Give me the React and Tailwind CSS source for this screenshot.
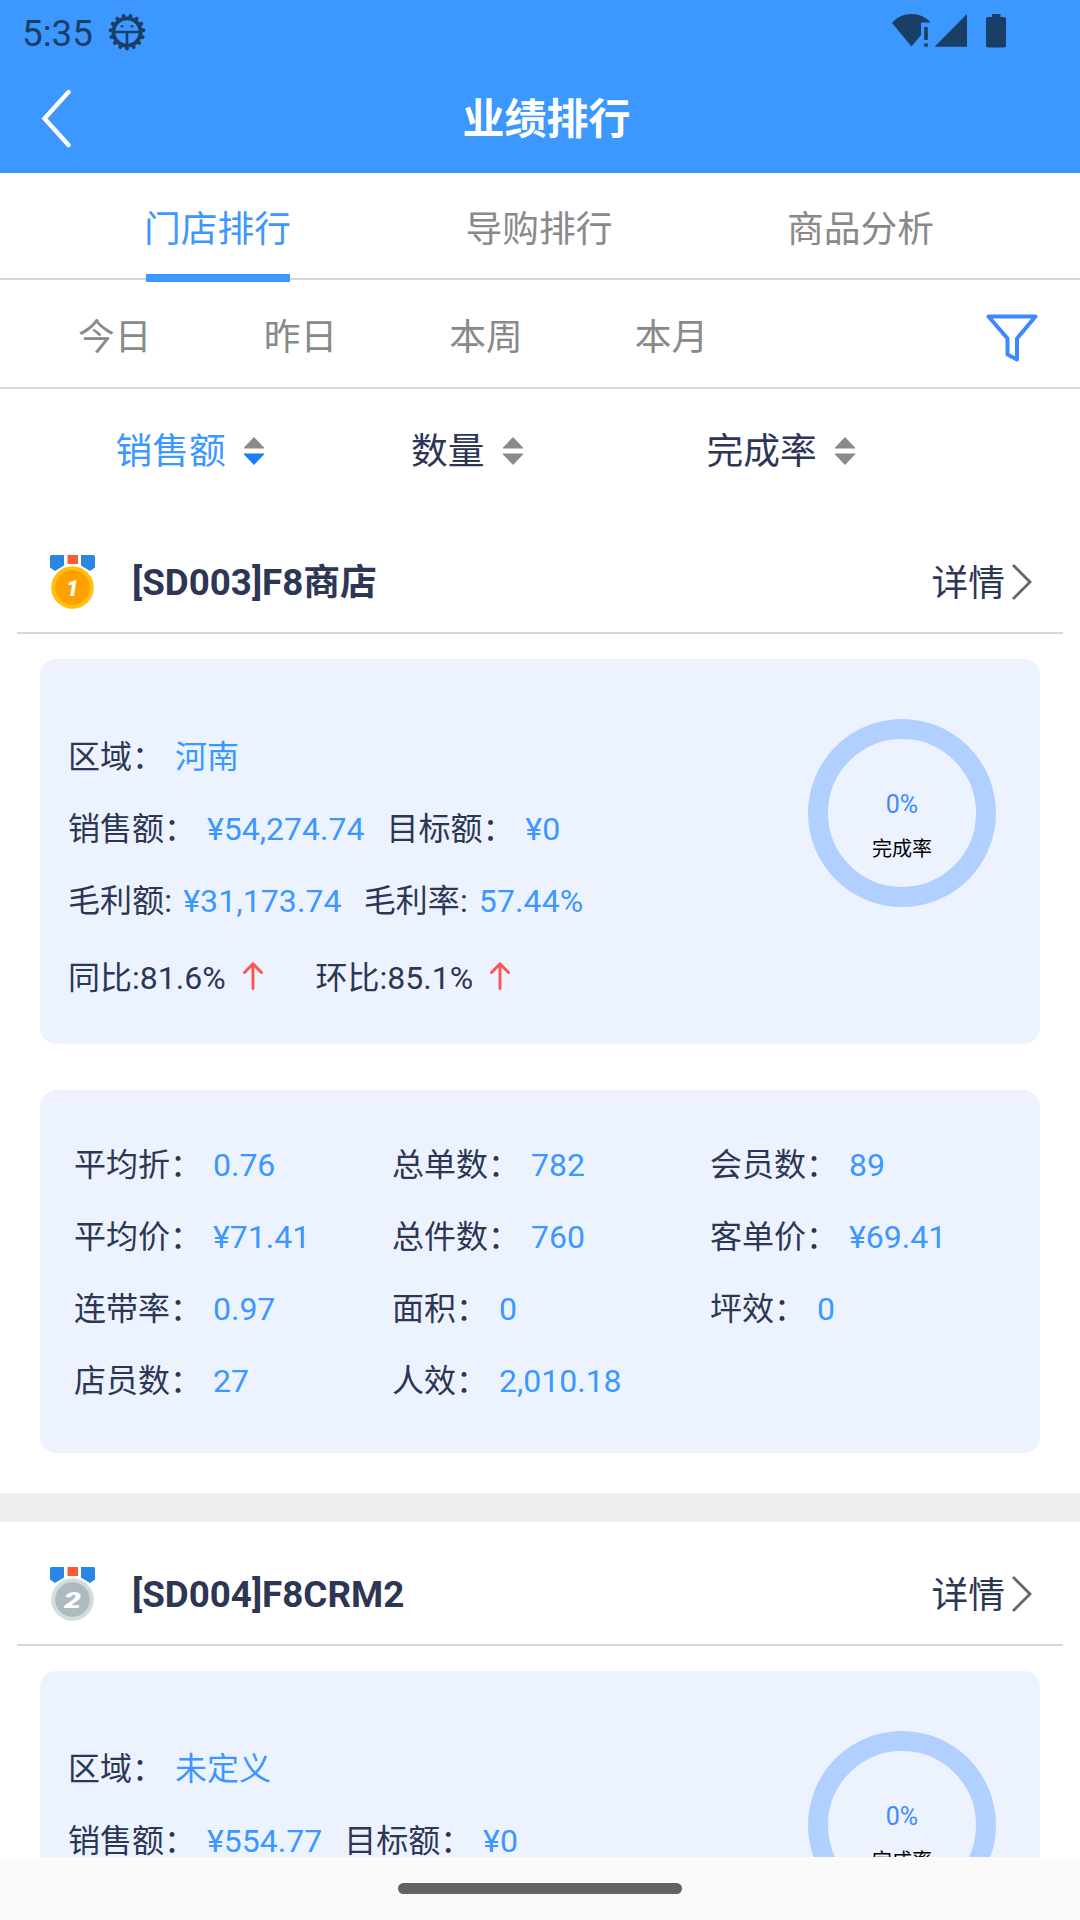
import React, { useState } from 'react';

const tabs = ['门店排行', '导购排行', '商品分析'];
const ranges = ['今日', '昨日', '本周', '本月'];
const sorts = ['销售额', '数量', '完成率'];

const stores = [
  {
    rank: 1,
    name: '[SD003]F8商店',
    area: '河南',
    sales: '¥54,274.74',
    target: '¥0',
    profit: '¥31,173.74',
    profitRate: '57.44%',
    yoy: '81.6%',
    mom: '85.1%',
    rate: '0%',
    stats: [
      ['平均折', '0.76'], ['总单数', '782'], ['会员数', '89'],
      ['平均价', '¥71.41'], ['总件数', '760'], ['客单价', '¥69.41'],
      ['连带率', '0.97'], ['面积', '0'], ['坪效', '0'],
      ['店员数', '27'], ['人效', '2,010.18'],
    ],
  },
  {
    rank: 2,
    name: '[SD004]F8CRM2',
    area: '未定义',
    sales: '¥554.77',
    target: '¥0',
    rate: '0%',
    stats: [],
  },
];

const BugIcon = () => (
  <svg width="38" height="38" viewBox="-19 -19 38 38" fill="none" stroke="#1a3f66">
    <circle r="13.6" strokeWidth="3.8" />
    {Array.from({ length: 15 }, (_, i) => (
      <path key={i} d="M0 14.500V16.500" strokeWidth="3.8" strokeLinecap="round" transform={`rotate(${i * 24})`} />
    ))}
    <path d="M-13 0H13M0 0V14" strokeWidth="2.6" />
    <circle cx="-5" cy="-5.8" r="1.3" fill="#1a3f66" stroke="none" />
    <circle cx="5" cy="-5.8" r="1.3" fill="#1a3f66" stroke="none" />
  </svg>
);

const StatusBar = () => (
  <div className="flex h-[62px] items-center pl-[22px] pr-[73px] pt-px text-[#1a3f66]">
    <span className="pt-[6px] text-[36.75px] leading-none">5:35</span>
    <div className="ml-[15px]"><BugIcon /></div>
    <svg className="-mt-px ml-auto" width="115" height="36" viewBox="0 0 115 36" fill="currentColor">
      <path d="M0 10C5 4 12 1 19.500 1S34 4 38.500 9.500H29V22L19.500 33.500Z" />
      <path d="M32.200 14h3.600v13h-3.600zM32.200 30.500h3.600v3.300h-3.600z" />
      <path d="M42.500 33.800L75 1V33.800Z" />
      <path d="M100 1h8.500v3h3.500a2 2 0 0 1 2 2v26.500a2 2 0 0 1-2 2H96a2 2 0 0 1-2-2V6a2 2 0 0 1 2-2h4z" />
    </svg>
  </div>
);

const SortIcon = ({ active }) => (
  <svg className="-mt-[2px] ml-[18px]" width="20" height="30" viewBox="0 0 20 30">
    <path d="M10 1L20 11.500V12.500H0V11.500Z" fill="#8a8a8a" />
    <path d="M0 17.500H20V18.500L10 29L0 18.500Z" fill={active ? '#1a7dfa' : '#8a8a8a'} />
  </svg>
);

const Medal = ({ rank }) => (
  <svg width="46" height="55" viewBox="0 0 46 55">
    <path d="M0 1.500Q0 0 1.500 0H14V10.500L5 16L0 12.500Z" fill="#2b85e7" />
    <path d="M45 1.500Q45 0 43.500 0H31V10.500L40 16L45 12.500Z" fill="#2b85e7" />
    <path d="M17.500 0H28V9H17.500Z" fill="#ff5a36" />
    <circle cx="22.500" cy="32.500" r="21.300" fill={rank === 1 ? '#ffc20a' : '#d3dddd'} />
    <circle cx="22.500" cy="32.500" r="17.300" fill={rank === 1 ? '#ff9f00' : '#aeb9c0'} />
    <text
      x="22.500"
      y="41"
      textAnchor="middle"
      className="fill-white text-[22px] font-black italic"
      textLength={rank === 1 ? undefined : 17}
      lengthAdjust="spacingAndGlyphs"
    >
      {rank}
    </text>
  </svg>
);

const UpArrow = () => (
  <svg className="-mt-[4px] ml-[17px]" width="20" height="28" viewBox="0 0 20 28" fill="none" stroke="#ff5353" strokeWidth="2.9" strokeLinecap="round" strokeLinejoin="round">
    <path d="M10 26.500V2M1.500 10.500L10 1.800L18.500 10.500" />
  </svg>
);

const Field = ({ label, value }) => (
  <span className="whitespace-pre">
    {label} <span className="ml-[3px] text-[#3c97ff]">{value}</span>
  </span>
);

const StoreCard = ({ store }) => (
  <section className="shrink-0">
    <div className="mx-[17px] flex h-[112px] items-center border-b-2 border-[#d8d8d8] pl-[33px] pr-[30px]">
      <div className="pt-[11px]"><Medal rank={store.rank} /></div>
      <h2 className="ml-[36px] pt-[13px] text-[36.75px] font-bold leading-none">{store.name}</h2>
      <button className="ml-auto flex items-center pt-[14px] text-[36.75px] leading-none">
        详情
        <svg className="-mt-[5px] ml-[6px]" width="22" height="36" viewBox="0 0 22 36" fill="none" stroke="#666" strokeWidth="2.8">
          <path d="M2 1L19 18L2 35" />
        </svg>
      </button>
    </div>

    <div className="mx-10 mt-[25px] flex h-[385px] justify-between rounded-2xl bg-[#ecf3ff] pl-[28px] pr-[44px] pt-[61px]">
      <div className="pt-px text-[32px] leading-[72px]">
        <div><Field label="区域：" value={store.area} /></div>
        <div className="flex gap-[22px]">
          <Field label="销售额：" value={store.sales} />
          <Field label="目标额：" value={store.target} />
        </div>
        {store.profit && (
          <>
            <div className="flex gap-[22px] tracking-[0.1px]">
              <Field label="毛利额:" value={store.profit} />
              <Field label="毛利率:" value={store.profitRate} />
            </div>
            <div className="mt-[5px] flex items-center">
              同比:{store.yoy}
              <UpArrow />
              <span className="ml-[53px]">环比:{store.mom}</span>
              <UpArrow />
            </div>
          </>
        )}
      </div>
      <div className="-mt-px flex size-[188px] flex-col items-center rounded-full border-[20.5px] border-[#b1d0ff] pt-[51px]">
        <span className="text-[25px] leading-[30px] text-[#4089ff]">{store.rate}</span>
        <span className="mt-[15px] text-[20px] leading-[28px] text-black">完成率</span>
      </div>
    </div>

    <div className="mx-10 mt-[46px] grid h-[363px] grid-cols-[318px_318px_318px] content-start rounded-2xl bg-[#ecf3ff] pl-[34px] pt-[39px] text-[32px] leading-[72px]">
      {store.stats.map(([label, value]) => (
        <Field key={label} label={`${label}：`} value={value} />
      ))}
    </div>
  </section>
);

const App = () => {
  const [tab, setTab] = useState(0);
  const [range, setRange] = useState(null);
  const [sort, setSort] = useState(0);

  return (
    <div className="flex h-[1920px] w-[1080px] flex-col overflow-hidden bg-white font-['Roboto','Noto_Sans_CJK_SC',sans-serif] text-[#2d3655]">
      {/* HEADER */}
      <header className="h-[173px] shrink-0 bg-[#3c97ff]">
        <StatusBar />
        <div className="flex h-[111px] items-center pl-[40px] pr-[59px]">
          <svg width="32" height="60" viewBox="0 0 32 60" fill="none" stroke="white" strokeWidth="4.4" strokeLinecap="round">
            <path d="M28.500 4L4.500 30.500L28.500 57" />
          </svg>
          <h1 className="flex-1 pt-[4px] text-center text-[42px] font-bold leading-none text-white">业绩排行</h1>
        </div>
      </header>

      {/* TABS */}
      <nav className="flex h-[107px] shrink-0 justify-center border-b-2 border-[#d8d8d8] pr-[2px] text-[36.75px]">
        {tabs.map((name, i) => (
          <button key={name} onClick={() => setTab(i)} className="flex w-[321.5px] flex-col items-center">
            <span className={i === tab ? 'h-[101px] leading-[113px] text-[#3c97ff]' : 'h-[101px] leading-[113px] text-[#898989]'}>{name}</span>
            {i === tab && <span className="h-2 w-[144px] shrink-0 bg-[#3c97ff]" />}
          </button>
        ))}
      </nav>

      {/* DATE RANGE */}
      <div className="flex h-[109px] shrink-0 items-center border-b-2 border-[#d8d8d8] pl-[22px] pr-[42px] pt-[9px] text-[36.75px]">
        {ranges.map((name, i) => (
          <button key={name} onClick={() => setRange(i)} className={i === range ? 'w-[185.6px] text-[#3c97ff]' : 'w-[185.6px] text-[#898989]'}>{name}</button>
        ))}
        <svg className="ml-auto" width="52" height="48" viewBox="0 0 52 48" fill="none" stroke="#3f87ff" strokeWidth="4" strokeLinejoin="round">
          <path d="M2.500 2.500H49.500L31 24.500V45.500L21.500 40.500V24.500Z" />
        </svg>
      </div>

      {/* SORT */}
      <div className="flex h-[131px] shrink-0 items-center pb-[5px] pl-[115.5px] text-[36.75px]">
        {sorts.map((name, i) => (
          <button key={name} onClick={() => setSort(i)} className={i === sort ? 'flex w-[295.5px] items-center text-[#3c97ff]' : 'flex w-[295.5px] items-center'}>
            {name}
            <SortIcon active={i === sort} />
          </button>
        ))}
      </div>

      {/* STORE LIST */}
      <main className="flex h-[1337px] shrink-0 flex-col gap-[40px] overflow-hidden pt-[2px]">
        {stores.map((store, i) => (
          <React.Fragment key={store.rank}>
            {i > 0 && <div className="-mb-[28px] h-[29px] shrink-0 bg-[#efefef]" />}
            <StoreCard store={store} />
          </React.Fragment>
        ))}
      </main>

      <footer className="flex h-[63px] shrink-0 justify-center bg-[#fafafa] pt-[26px]">
        <div className="h-[11px] w-[284px] rounded-full bg-[#636363]" />
      </footer>
    </div>
  );
};

export default App;
